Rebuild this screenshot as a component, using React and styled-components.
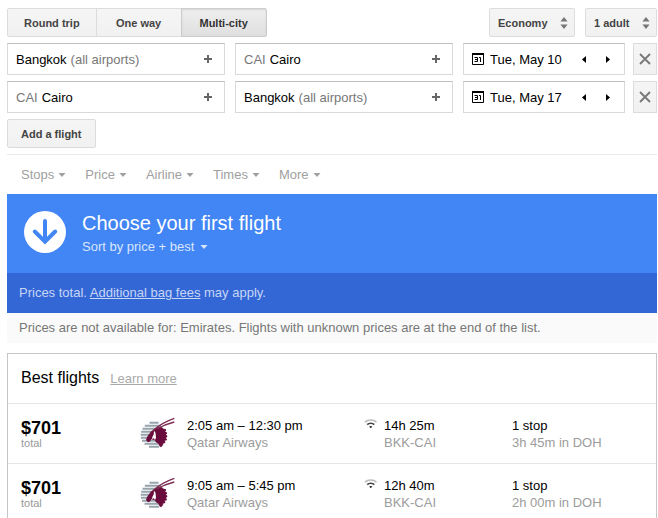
import React, { useState } from 'react'
import styled, { createGlobalStyle } from 'styled-components'

const GlobalStyle = createGlobalStyle`
  * {
    box-sizing: border-box;
  }

  body {
    margin: 0;
    background: #fff;
    color: #000;
    font-family: 'Liberation Sans', Arial, sans-serif;
    font-size: 13px;
    line-height: 17px;
  }

  button,
  input,
  select {
    margin: 0;
    font-family: inherit;
  }
`

const Page = styled.main`
  height: 100vh;
  padding: 8px 1px 0 7px;
  overflow: hidden;
`

const Toolbar = styled.div`
  display: flex;
  justify-content: space-between;
  margin-bottom: 6px;
`

const ButtonGroup = styled.div`
  display: flex;
`

const GreyButton = styled.button`
  height: 29px;
  padding: 0 13px;
  border: 1px solid #dcdcdc;
  border-radius: 2px;
  background: linear-gradient(#f5f5f5, #f1f1f1);
  color: #444;
  font-size: 11px;
  font-weight: 700;
  cursor: pointer;
`

const TripButton = styled(GreyButton)`
  min-width: 86px;
  padding: 0 16px;
  border-radius: 0;
  border-color: ${({ $active }) => ($active ? '#ccc' : '#dcdcdc')};
  background: ${({ $active }) =>
    $active ? 'linear-gradient(#eee, #e0e0e0)' : 'linear-gradient(#f5f5f5, #f1f1f1)'};
  box-shadow: ${({ $active }) => ($active ? 'inset 0 1px 2px rgba(0, 0, 0, 0.1)' : 'none')};
  color: ${({ $active }) => ($active ? '#333' : '#444')};

  &:first-child {
    border-radius: 2px 0 0 2px;
  }

  &:last-child {
    border-radius: 0 2px 2px 0;
  }

  & + & {
    margin-left: -1px;
  }
`

const SelectGroup = styled.div`
  display: flex;
  gap: 10px;
`

const SelectBox = styled.label`
  display: grid;
  align-items: center;

  & > * {
    grid-area: 1 / 1;
  }

  & > svg {
    justify-self: end;
    margin-right: 7px;
    pointer-events: none;
  }
`

const Select = styled.select`
  height: 29px;
  padding: 0 26px 0 8px;
  border: 1px solid #dcdcdc;
  border-radius: 2px;
  appearance: none;
  background: linear-gradient(#f5f5f5, #f1f1f1);
  color: #444;
  font-size: 11px;
  font-weight: 700;
`

const Legs = styled.div`
  display: grid;
  gap: 6px;
  margin-bottom: 6px;
`

const Leg = styled.div`
  display: flex;
  gap: 8px;
`

const LegFields = styled.div`
  display: grid;
  flex: 1;
  grid-template-columns: 1fr 1fr 162px;
  column-gap: 10px;
`

const Field = styled.div`
  display: flex;
  align-items: center;
  min-width: 0;
  height: 32px;
  padding: 0 8px;
  border: 1px solid #d9d9d9;
  border-top-color: #c0c0c0;
`

const DateBox = styled(Field)`
  padding-right: 4px;
`

const FieldLabel = styled.label`
  display: flex;
  flex: 1;
  align-items: center;
  gap: 4px;
  min-width: 0;
  color: #777;
  white-space: nowrap;
`

const TextInput = styled.input`
  field-sizing: content;
  min-width: 0;
  padding: 0;
  border: 0;
  outline: 0;
  background: transparent;
  color: #000;
  font-size: 13px;
  line-height: 17px;
`

const IconButton = styled.button`
  display: flex;
  align-items: center;
  justify-content: center;
  width: ${({ $wide }) => ($wide ? '24px' : '16px')};
  height: 24px;
  padding: 0;
  border: 0;
  background: transparent;
  cursor: pointer;
`

const DateLabel = styled(FieldLabel)`
  gap: 6px;
`

const RemoveButton = styled(GreyButton)`
  display: flex;
  align-items: center;
  justify-content: center;
  width: 24px;
  height: 32px;
  padding: 0;
  border-radius: 0;
`

const Filters = styled.nav`
  display: flex;
  align-items: center;
  gap: 19px;
  height: 40px;
  margin-top: 6px;
  padding-left: 14px;
  border-top: 1px solid #ebebeb;
`

const MenuButton = styled.button`
  display: flex;
  align-items: center;
  gap: ${({ $light }) => ($light ? '6px' : '4px')};
  padding: 0;
  border: 0;
  background: transparent;
  color: ${({ $light }) => ($light ? '#d9e6fd' : '#a0a0a0')};
  font-size: 13px;
  line-height: 17px;
  cursor: pointer;
`

const Banner = styled.header`
  display: flex;
  align-items: flex-start;
  gap: 16px;
  height: 79px;
  padding: 17px 17px 0;
  background: #4285f4;
`

const BannerText = styled.div`
  display: grid;
  justify-items: start;
  gap: 3px;
`

const BannerTitle = styled.h1`
  margin: 0;
  color: #fff;
  font-size: 20px;
  font-weight: 400;
  line-height: 24px;
`

const PriceNote = styled.p`
  margin: 0;
  padding: 11px 12px 12px;
  background: #3367d6;
  color: #c8d6f5;

  a {
    color: inherit;
  }
`

const Unavailable = styled.p`
  margin: 0 0 10px;
  padding: 6px 12px 7px;
  background: #fafafa;
  color: #777;
`

const Results = styled.section`
  border: 1px solid #c6c6c6;
`

const ResultsHeader = styled.div`
  display: flex;
  align-items: baseline;
  gap: 11px;
  padding: 14px 13px 15px;

  a {
    color: #aaa;
  }
`

const ResultsTitle = styled.h2`
  margin: 0;
  font-size: 16px;
  font-weight: 400;
  line-height: 20px;
`

const FlightTable = styled.table`
  width: 100%;
  border-collapse: collapse;
  table-layout: fixed;
`

const FlightRow = styled.tr`
  height: 60px;
  border-top: 1px solid #e5e5e5;
`

const Cell = styled.td`
  width: ${({ $width }) => $width || 'auto'};
  padding: ${({ $first }) => ($first ? '14px 0 0 13px' : '13px 0 0')};
  vertical-align: top;
  white-space: nowrap;

  & > svg {
    display: block;
  }
`

const Price = styled.div`
  font-size: 18px;
  font-weight: 700;
  line-height: 20px;
`

const Small = styled.div`
  color: #999;
  font-size: 11px;
  line-height: 10px;
`

const Main = styled.div`
  color: #000;
`

const Muted = styled.div`
  color: #9c9c9c;
`

const Caret = () => (
  <svg width="8" height="4" viewBox="0 0 8 4" fill="currentColor" aria-hidden="true">
    <path d="M0.5 0h7L4 4z" />
  </svg>
)

const UpDown = () => (
  <svg width="8" height="12" viewBox="0 0 8 12" fill="#777" aria-hidden="true">
    <path d="M4 0l3.6 4.6H0.4zM4 12L0.4 7.4h7.2z" />
  </svg>
)

const Plus = () => (
  <svg width="8" height="8" viewBox="0 0 8 8" fill="#666" aria-hidden="true">
    <path d="M3 0h2v3h3v2H5v3H3V5H0V3h3z" />
  </svg>
)

const Calendar = () => (
  <svg width="12" height="12" viewBox="0 0 12 12" fill="none" stroke="#000" aria-hidden="true">
    <path d="M0.5 0.5h11v11H0.5z" />
    <path d="M0 1h12" strokeWidth="2" />
    <path d="M2.5 4.5h3v4h-3M3 6.5h2.5M7 4.5h1.5V9" />
  </svg>
)

const Triangle = ({ right }) => (
  <svg width="4" height="7" viewBox="0 0 4 7" fill="#000" aria-hidden="true">
    <path d={right ? 'M0 0l4 3.5-4 3.5z' : 'M4 0L0 3.5l4 3.5z'} />
  </svg>
)

const Cross = () => (
  <svg width="12" height="12" viewBox="0 0 12 12" stroke="#777" strokeWidth="1.8" aria-hidden="true">
    <path d="M1 1l10 10M11 1L1 11" />
  </svg>
)

const DownCircle = () => (
  <svg width="42" height="42" viewBox="0 0 42 42" aria-hidden="true">
    <circle cx="21" cy="21" r="21" fill="#fff" />
    <path
      d="M21 10v20M10.8 20.5L21 30.7l10.2-10.2"
      fill="none"
      stroke="#4285f4"
      strokeWidth="4"
      strokeLinecap="round"
    />
  </svg>
)

const Wifi = () => (
  <svg width="13" height="12" viewBox="0 0 13 12" fill="none" aria-label="Wi-Fi" role="img">
    <path d="M1 5.2C4 2.3 9.500 2.300 12.500 5.200" stroke="#bbb" strokeWidth="1.600" />
    <path d="M3.200 7.600C5 5.800 8.500 5.800 10.300 7.600" stroke="#444" strokeWidth="1.700" />
    <path d="M5.200 9.600C6.100 8.800 7.400 8.800 8.300 9.600L6.750 11.200z" fill="#222" />
  </svg>
)

const QatarLogo = () => (
  <svg width="36" height="33" viewBox="0 1 36 33" role="img" aria-label="Qatar Airways">
    <path
      d="M9.500 6.700h9M4.800 9.700h16M2.500 12.700h20M1.200 15.700h22M0.700 18.700h22M0.900 21.700h22M2 24.700h22M4.500 27.700h19M9 30.700h10"
      stroke="#98a4ac"
      strokeWidth="1.900"
    />
    <path
      d="M6 24l1-3 4-5.500 5.500-4 4.500-1 2 2 3 .8v1.400l-1 .8 2 .9v1.400l-1.300.9 1.500.9v1.500l-1.500.8 1.200 1v1.300l-2.400.6 1 1.200-.8 1.200-2 .3.200 1.800-1.900 2-1.500-1-1-2.500-2.500-1.500-1.500-2.500-2 .2-1-1-1.500 2.500-2 .8z"
      fill="#6a0d3c"
    />
    <path d="M14 14.800l1.500 2 .5 5-1 2.200-1.200-2-1.700 1.700.3-3 1.300-2.200z" fill="#fff" />
    <path
      d="M13 14.500C18.500 9.500 25 5.500 34.300 2.300M17 13C22 10 27 7.800 34.300 6"
      fill="none"
      stroke="#7c2c52"
      strokeWidth="1.300"
    />
  </svg>
)

const trips = ['Round trip', 'One way', 'Multi-city']

const airports = {
  bkk: { name: 'Bangkok', note: '(all airports)' },
  cai: { name: 'Cairo', code: 'CAI' },
}

const legs = [
  { id: 1, from: airports.bkk, to: airports.cai, date: 'Tue, May 10' },
  { id: 2, from: airports.cai, to: airports.bkk, date: 'Tue, May 17' },
]

const filters = ['Stops', 'Price', 'Airline', 'Times', 'More']

const flights = [
  { price: '$701', times: '2:05 am – 12:30 pm', duration: '14h 25m', layover: '3h 45m in DOH' },
  { price: '$701', times: '9:05 am – 5:45 pm', duration: '12h 40m', layover: '2h 00m in DOH' },
]

function AirportField({ label, airport }) {
  return (
    <Field>
      <FieldLabel>
        {airport.code && <span>{airport.code}</span>}
        <TextInput aria-label={label} defaultValue={airport.name} />
        {airport.note && <span>{airport.note}</span>}
      </FieldLabel>
      <IconButton type="button" aria-label="Add airport">
        <Plus />
      </IconButton>
    </Field>
  )
}

function DateField({ date }) {
  return (
    <DateBox>
      <DateLabel>
        <Calendar />
        <TextInput aria-label="Departure date" defaultValue={date} />
      </DateLabel>
      <IconButton type="button" $wide aria-label="Previous day">
        <Triangle />
      </IconButton>
      <IconButton type="button" $wide aria-label="Next day">
        <Triangle right />
      </IconButton>
    </DateBox>
  )
}

function Flight({ flight }) {
  return (
    <FlightRow>
      <Cell $first $width="132px">
        <Price>{flight.price}</Price>
        <Small>total</Small>
      </Cell>
      <Cell $width="47px">
        <QatarLogo />
      </Cell>
      <Cell $width="177px">
        <Main>{flight.times}</Main>
        <Muted>Qatar Airways</Muted>
      </Cell>
      <Cell $width="20px">
        <Wifi />
      </Cell>
      <Cell $width="128px">
        <Main>{flight.duration}</Main>
        <Muted>BKK-CAI</Muted>
      </Cell>
      <Cell>
        <Main>1 stop</Main>
        <Muted>{flight.layover}</Muted>
      </Cell>
    </FlightRow>
  )
}

function App() {
  const [trip, setTrip] = useState('Multi-city')

  return (
    <>
      <GlobalStyle />
      <Page>
        <Toolbar>
          <ButtonGroup>
            {trips.map((name) => (
              <TripButton
                key={name}
                type="button"
                $active={name === trip}
                aria-pressed={name === trip}
                onClick={() => setTrip(name)}
              >
                {name}
              </TripButton>
            ))}
          </ButtonGroup>
          <SelectGroup>
            <SelectBox>
              <Select aria-label="Cabin class">
                <option>Economy</option>
              </Select>
              <UpDown />
            </SelectBox>
            <SelectBox>
              <Select aria-label="Passengers">
                <option>1 adult</option>
              </Select>
              <UpDown />
            </SelectBox>
          </SelectGroup>
        </Toolbar>
        <Legs>
          {legs.map((leg) => (
            <Leg key={leg.id}>
              <LegFields>
                <AirportField label="From" airport={leg.from} />
                <AirportField label="To" airport={leg.to} />
                <DateField date={leg.date} />
              </LegFields>
              <RemoveButton type="button" aria-label="Remove flight">
                <Cross />
              </RemoveButton>
            </Leg>
          ))}
        </Legs>
        <GreyButton type="button">Add a flight</GreyButton>
        <Filters>
          {filters.map((name) => (
            <MenuButton key={name} type="button">
              {name}
              <Caret />
            </MenuButton>
          ))}
        </Filters>
        <Banner>
          <DownCircle />
          <BannerText>
            <BannerTitle>Choose your first flight</BannerTitle>
            <MenuButton type="button" $light>
              Sort by price + best
              <Caret />
            </MenuButton>
          </BannerText>
        </Banner>
        <PriceNote>
          Prices total. <a href="#fees">Additional bag fees</a> may apply.
        </PriceNote>
        <Unavailable>
          Prices are not available for: Emirates. Flights with unknown prices are at the end of the
          list.
        </Unavailable>
        <Results>
          <ResultsHeader>
            <ResultsTitle>Best flights</ResultsTitle>
            <a href="#learn">Learn more</a>
          </ResultsHeader>
          <FlightTable>
            <tbody>
              {flights.map((flight) => (
                <Flight key={flight.times} flight={flight} />
              ))}
            </tbody>
          </FlightTable>
        </Results>
      </Page>
    </>
  )
}

export default App
